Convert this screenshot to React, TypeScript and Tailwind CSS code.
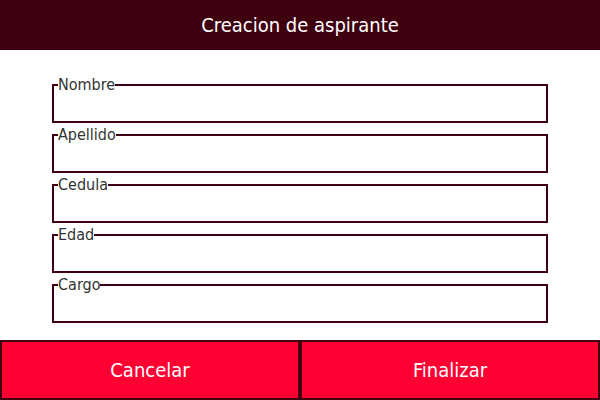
import React from 'react'

const fields = ['Nombre', 'Apellido', 'Cedula', 'Edad', 'Cargo']

export default function App() {
  return (
    <div className="flex h-[400px] w-[600px] flex-col bg-white font-['DejaVu_Sans_Condensed','DejaVu_Sans',sans-serif]">
      <header className="flex h-[50px] shrink-0 items-center justify-center bg-[#3f0010] text-[20px] text-white">
        Creacion de aspirante
      </header>
      <form className="flex flex-1 flex-col gap-[4px] px-[52px] pt-[27px]">
        {fields.map((f) => (
          <fieldset key={f} className="h-[46px] shrink-0 border-2 border-[#3f0010]">
            <legend className="ml-[4px] text-[16px] leading-[16px] text-[#333]">{f}</legend>
            <input className="w-full bg-transparent outline-none" />
          </fieldset>
        ))}
      </form>
      <div className="flex h-[60px] shrink-0">
        <button className="flex-1 border-2 border-[#3f0010] bg-[#ff0033] text-[20px] text-white">Cancelar</button>
        <button className="flex-1 border-2 border-[#3f0010] bg-[#ff0033] text-[20px] text-white">Finalizar</button>
      </div>
    </div>
  )
}
